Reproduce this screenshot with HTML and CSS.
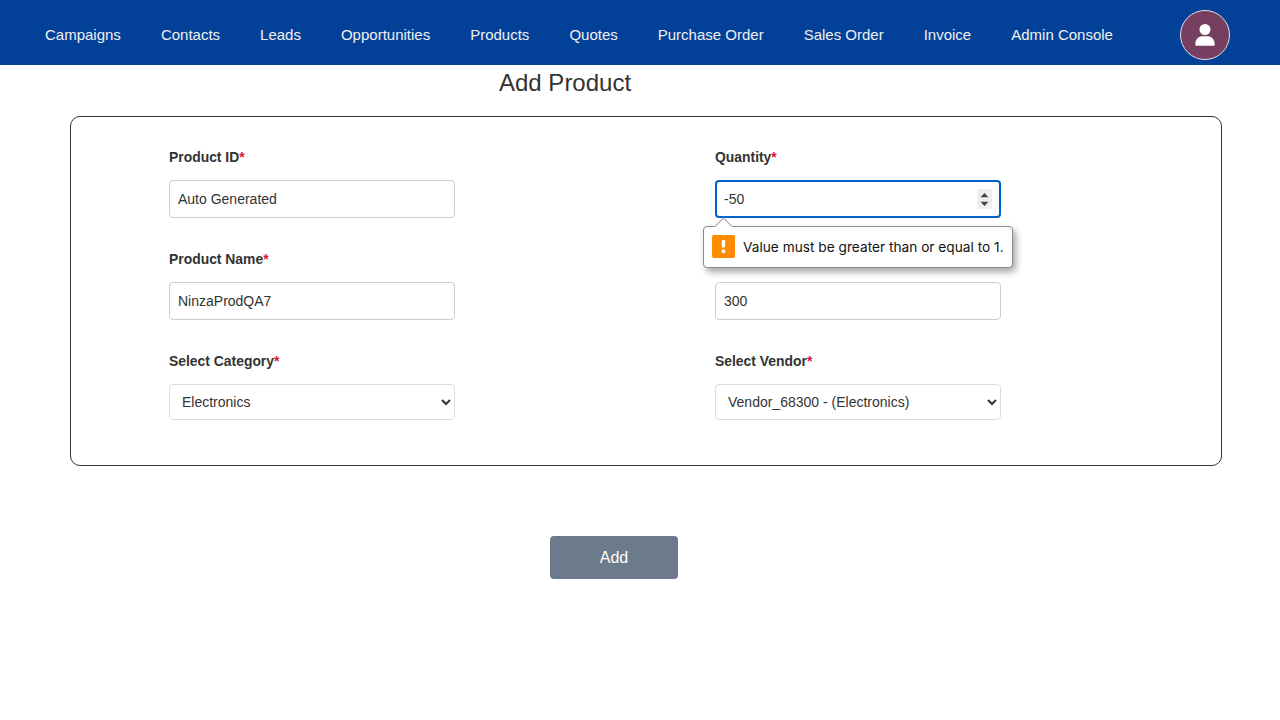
FILE: index.html
```html
<!DOCTYPE html>
<html lang="en">
<head>
  <meta charset="UTF-8" />
  <meta name="viewport" content="width=device-width, initial-scale=1.0"/>
  <title>Add Product</title>
  <link rel="stylesheet" href="styles.css">
</head>
<body>
  <nav class="navbar">
    <ul class="nav-links">
      <li>Campaigns</li>
      <li>Contacts</li>
      <li>Leads</li>
      <li>Opportunities</li>
      <li>Products</li>
      <li>Quotes</li>
      <li>Purchase Order</li>
      <li>Sales Order</li>
      <li>Invoice</li>
      <li>Admin Console</li>
    </ul>
    <div class="avatar">
      <svg width="20" height="22" viewBox="0 0 20 22" fill="#fff">
        <circle cx="10" cy="5.500" r="5.500"/>
        <path d="M.3 20.500C.3 15 4 12.300 7 12.300h6c3 0 6.700 2.700 6.700 8.200 0 .8-.5 1.300-1.200 1.300h-17c-.7 0-1.200-.5-1.200-1.300z"/>
      </svg>
    </div>
  </nav>

  <h1 class="page-title">Add Product</h1>

  <form class="product-card">
    <div class="field">
      <label>Product ID<span class="req">*</span></label>
      <input type="text" value="Auto Generated" />
    </div>
    <div class="field">
      <label>Quantity<span class="req">*</span></label>
      <div class="input-wrap">
        <input type="text" class="focused" value="-50" />
        <span class="spinner">
          <svg width="15" height="20" viewBox="0 0 15 20" fill="#444">
            <path d="M7.500 4 11.500 8.300h-8z"/>
            <path d="M7.500 17 11.500 12.700h-8z"/>
          </svg>
        </span>
        <div class="tooltip">
          <span class="tooltip-arrow"></span>
          <svg class="warn-icon" width="23" height="23" viewBox="0 0 23 23">
            <rect width="23" height="23" rx="2" fill="#ff8c00"/>
            <rect x="9.800" y="5" width="3.400" height="7.500" rx="1" fill="#fff"/>
            <rect x="9.800" y="14.500" width="3.400" height="3.500" rx="1" fill="#fff"/>
          </svg>
          <span>Value must be greater than or equal to 1.</span>
        </div>
      </div>
    </div>
    <div class="field">
      <label>Product Name<span class="req">*</span></label>
      <input type="text" value="NinzaProdQA7" />
    </div>
    <div class="field">
      <label></label>
      <input type="text" value="300" aria-label="Price" />
    </div>
    <div class="field">
      <label>Select Category<span class="req">*</span></label>
      <select><option>Electronics</option></select>
    </div>
    <div class="field">
      <label>Select Vendor<span class="req">*</span></label>
      <select><option>Vendor_68300 - (Electronics)</option></select>
    </div>
  </form>

  <button class="add-btn" type="button">Add</button>
</body>
</html>
```

FILE: styles.css
```css
* {
  box-sizing: border-box;
}
body {
  margin: 0;
  font-family: "Liberation Sans", Arial, sans-serif;
  color: #333;
  background-color: #fff;
}
.navbar {
  height: 65px;
  background-color: #034199;
  display: flex;
  align-items: center;
  padding: 5px 50px 0 45px;
}
.nav-links {
  list-style: none;
  margin: 0 0 2px;
  padding: 0;
  display: flex;
  gap: 40px;
  color: #f0f0f0;
  font-size: 15px;
}
.avatar {
  margin-left: auto;
  width: 50px;
  height: 50px;
  border-radius: 50%;
  border: 1px solid #e6e0e6;
  background-color: #763f60;
  display: flex;
  align-items: center;
  justify-content: center;
}
.page-title {
  margin: 4px 0 0 499px;
  height: 47px;
  font-size: 24px;
  font-weight: 400;
  line-height: 28px;
}
.product-card {
  margin: 0 58px 0 70px;
  height: 350px;
  border: 1px solid #333;
  border-radius: 10px;
  padding: 30px 98px 0;
  display: grid;
  grid-template-columns: 286px 286px;
  column-gap: 260px;
  grid-auto-rows: 102px;
}
.field label {
  display: block;
  height: 33px;
  font-size: 13.9px;
  font-weight: 700;
  line-height: 20px;
}
.req {
  color: #e3122c;
}
.field input,
.field select {
  display: block;
  width: 286px;
  font-family: inherit;
  font-size: 14px;
  color: #333;
  background-color: #fff;
  border: 1px solid #ccc;
  border-radius: 4px;
}
.field input {
  height: 38px;
  padding: 0 8px;
}
.field select {
  height: 36px;
  padding: 0 8px;
  border-color: #ddd;
}
.input-wrap {
  position: relative;
}
.field input.focused {
  border: 2px solid #0060cc;
  padding: 0 7px;
  outline: none;
}
.spinner {
  position: absolute;
  top: 9px;
  right: 9px;
  width: 15px;
  height: 20px;
  background-color: #efefef;
  display: flex;
}
.tooltip {
  position: absolute;
  top: 46px;
  left: -12px;
  width: 310px;
  height: 41.5px;
  display: flex;
  align-items: center;
  gap: 8px;
  padding-left: 8px;
  background-color: #fff;
  border: 1px solid #8a8a8a;
  border-radius: 4px;
  box-shadow: 3px 4px 7px rgba(0, 0, 0, 0.35);
  color: #111;
  font-family: Inter, "Liberation Sans", sans-serif;
  font-size: 13.7px;
  white-space: nowrap;
  z-index: 2;
}
.tooltip-arrow {
  position: absolute;
  top: -7px;
  left: 13px;
  width: 13px;
  height: 13px;
  background-color: #fff;
  border-top: 1px solid #a0a0a0;
  border-left: 1px solid #a0a0a0;
  transform: rotate(45deg);
}
.warn-icon {
  flex-shrink: 0;
}
.add-btn {
  display: block;
  margin: 70px 0 0 550px;
  width: 128px;
  height: 43px;
  border: none;
  border-radius: 4px;
  background-color: #6c7b8b;
  color: #fff;
  font-family: inherit;
  font-size: 16px;
}
```
